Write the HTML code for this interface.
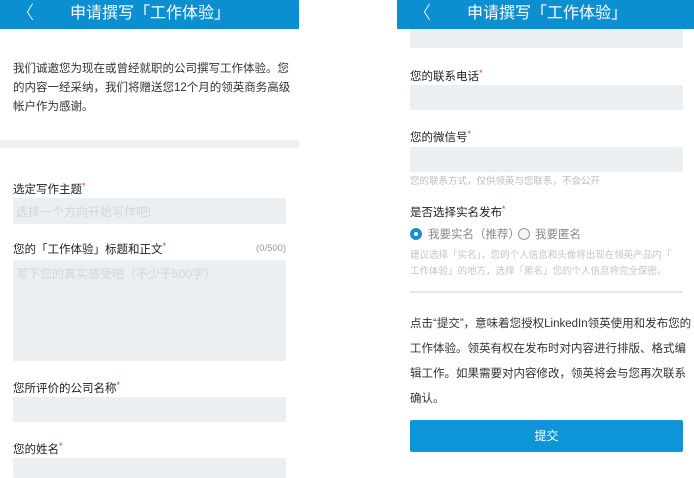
<!DOCTYPE html>
<html><head><meta charset="utf-8"><style>
*{margin:0;padding:0;box-sizing:border-box}
body{width:694px;height:473px;background:#fff;position:relative;overflow:hidden;font-family:"Liberation Sans","Noto Sans CJK SC",sans-serif;color:#333}
.a{position:absolute;white-space:nowrap}
.hd{position:absolute;top:0;height:29px;background:#0c8fd0;color:#fff;font-size:16px;line-height:27px}
.bk{position:absolute;left:16px;top:0;font-size:18px;font-weight:300}
.in{position:absolute;background:#ebeff2;border-radius:2px}
.l{position:absolute;font-size:11.5px;color:#222;white-space:nowrap}
.l i{color:#e33;font-style:normal;font-size:9px;vertical-align:top}
.ph{color:#cfd5da;font-size:12px;padding:5px 3px}
.h{position:absolute;font-size:9.5px;color:#bbb;white-space:nowrap}
</style></head><body>
<div class="hd" style="left:0;width:299px"><span class="bk">〈</span><span class="a" style="left:70px">申请撰写「工作体验」</span></div>
<div class="a" style="left:13px;top:60px;font-size:11.5px;line-height:19px;color:#333;white-space:normal;width:280px">我们诚邀您为现在或曾经就职的公司撰写工作体验。您的内容一经采纳，我们将赠送您12个月的领英商务高级帐户作为感谢。</div>
<div class="a" style="left:0;top:140px;width:299px;height:8px;background:#eef0f2"></div>
<div class="l" style="left:13px;top:181px">选定写作主题<i>*</i></div>
<div class="in ph" style="left:13px;top:198px;width:273px;height:26px">选择一个方向开始写作吧!</div>
<div class="l" style="left:13px;top:241px">您的「工作体验」标题和正文<i>*</i></div>
<div class="a" style="left:256px;top:243px;font-size:9.5px;color:#999">(0/500)</div>
<div class="in ph" style="left:13px;top:260px;width:273px;height:101px">写下您的真实感受吧（不少于500字）</div>
<div class="l" style="left:13px;top:380px">您所评价的公司名称<i>*</i></div>
<div class="in" style="left:13px;top:397px;width:273px;height:25px"></div>
<div class="l" style="left:13px;top:441px">您的姓名<i>*</i></div>
<div class="in" style="left:13px;top:458px;width:273px;height:20px"></div>

<div class="hd" style="left:397px;width:297px"><span class="bk">〈</span><span class="a" style="left:70px">申请撰写「工作体验」</span></div>
<div class="in" style="left:410px;top:29px;width:273px;height:19px;border-radius:0"></div>
<div class="l" style="left:410px;top:68px">您的联系电话<i>*</i></div>
<div class="in" style="left:410px;top:85px;width:273px;height:25px"></div>
<div class="l" style="left:410px;top:129px">您的微信号<i>*</i></div>
<div class="in" style="left:410px;top:147px;width:273px;height:25px"></div>
<div class="h" style="left:410px;top:173px">您的联系方式，仅供领英与您联系，不会公开</div>
<div class="l" style="left:410px;top:204px">是否选择实名发布<i>*</i></div>
<div class="a" style="left:410px;top:228px;width:12px;height:12px;border-radius:50%;background:#1a8fd0;border:1px solid #1a8fd0"><div style="position:absolute;left:3px;top:3px;width:4px;height:4px;border-radius:50%;background:#fff"></div></div>
<div class="a" style="left:428px;top:226px;font-size:11.5px;color:#888">我要实名（推荐）</div>
<div class="a" style="left:518px;top:228px;width:12px;height:12px;border-radius:50%;border:1px solid #999;background:#f6f6f6"></div>
<div class="a" style="left:535px;top:226px;font-size:11.5px;color:#888">我要匿名</div>
<div class="h" style="left:410px;top:248px;line-height:16px;color:#c4c4c4">建议选择「实名」，您的个人信息和头像将出现在领英产品内「<br>工作体验」的地方，选择「匿名」您的个人信息将完全保密。</div>
<div class="a" style="left:410px;top:291px;width:273px;height:2px;background:#e6e8ea"></div>
<div class="a" style="left:410px;top:312px;font-size:11.5px;line-height:25px;color:#333">点击“提交”，意味着您授权LinkedIn领英使用和发布您的<br>工作体验。领英有权在发布时对内容进行排版、格式编<br>辑工作。如果需要对内容修改，领英将会与您再次联系<br>确认。</div>
<div class="a" style="left:410px;top:420px;width:273px;height:32px;background:#0d95d8;border-radius:2px;color:#fff;font-size:12px;text-align:center;line-height:32px">提交</div>
</body></html>
